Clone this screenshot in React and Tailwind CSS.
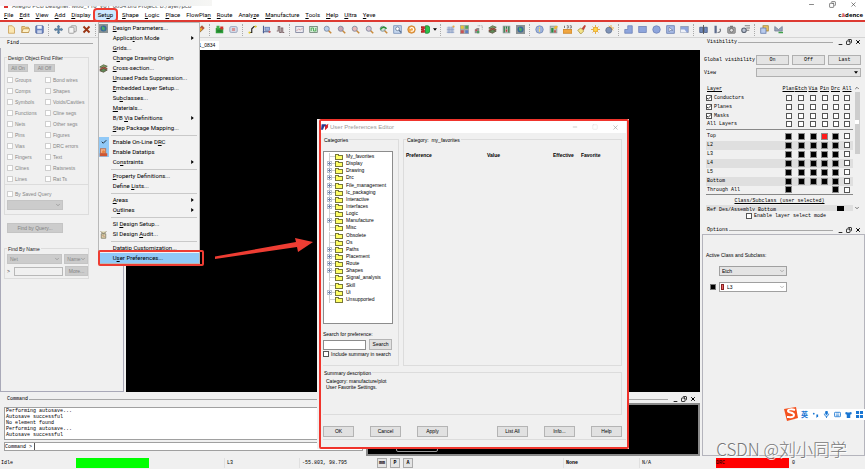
import React from 'react'
import { useState } from 'react'
import { Check, ChevronDown, ChevronUp, Copy, Minus, Square, X } from 'lucide-react'

const board = (
  <>
    <rect x="1" y="1" width="10" height="10" fill="#8b9496" />
    <rect x="2" y="2" width="8" height="8" fill="#b9c4c0" />
  </>
)

const lens = (fill) => (
  <>
    <path d="M7 7l4 4" stroke="#c98a3a" strokeWidth="2" />
    <circle cx="5" cy="5" r="3.4" fill={fill} stroke="#6f7f96" />
  </>
)

const icons = {
  new: <path d="M2 1h5l3 3v7H2z" fill="#fbe6b0" stroke="#c79a4c" />,
  open: (
    <>
      <path d="M1 10V2h4l1 1h4v7z" fill="#f3cf86" stroke="#b98f45" />
      <path d="M1 10l2-5h9l-2 5z" fill="#fdf0c8" stroke="#b98f45" />
    </>
  ),
  save: (
    <>
      <rect x="1" y="1" width="10" height="10" rx="1" fill="#6c86c4" stroke="#4a5d93" />
      <rect x="3" y="1" width="6" height="4" fill="#eef2fb" />
      <rect x="3" y="7" width="6" height="4" fill="#c9d3ea" />
    </>
  ),
  move: (
    <path
      d="M6 0l2 2.500H7V5h2.500V4L12 6 9.500 8V7H7v2.500h1L6 12 4 9.500h1V7H2.500v1L0 6l2.500-2v1H5V2.500H4z"
      fill="#5c86ab"
      stroke="#44627d"
      strokeWidth=".5"
    />
  ),
  copy: (
    <>
      <rect x="4" y="1" width="7" height="8" rx="1" fill="#e8e8e8" stroke="#8a8a8a" />
      <rect x="1" y="3" width="7" height="8" rx="1" fill="#f4f4f4" stroke="#8a8a8a" />
    </>
  ),
  remove: <path d="M2 2l8 8M10 2l-8 8" stroke="#9a3514" strokeWidth="2.500" />,
  pencil: (
    <>
      <path d="M1 11l2-5 5-5 3 3-5 5z" fill="#e8a33a" stroke="#7a5526" />
      <path d="M7 2l3 3" stroke="#c04040" strokeWidth="2" />
    </>
  ),
  place: (
    <>
      <rect x="1" y="4" width="10" height="7" fill="#2f9e3a" />
      <rect x="2" y="1" width="4" height="4" fill="#45b14f" />
      <rect x="7" y="2" width="4" height="4" fill="#d2322d" />
      <path d="M3 8h6" stroke="#175c1f" />
    </>
  ),
  chip: (
    <>
      <rect x="1" y="2" width="10" height="8" rx="2" fill="#d3d9e6" stroke="#8f9bb5" />
      <rect x="4" y="4" width="4" height="4" fill="#d89494" />
    </>
  ),
  route: (
    <>
      <path d="M2 10h3V5l3-3h3" fill="none" stroke="#222" strokeWidth="1.500" />
      <circle cx="2" cy="10" r="1.500" fill="#e6cd2d" />
      <circle cx="10" cy="2" r="1.500" fill="#e6cd2d" />
    </>
  ),
  slide: (
    <>
      <path d="M2 1v10M1 9h10" stroke="#4a5f94" strokeWidth="1.500" />
      <rect x="4" y="3" width="6" height="4" fill="#9fb2de" stroke="#5f77b0" />
      <circle cx="10" cy="9" r="1.500" fill="#c65b5b" />
    </>
  ),
  delay: <path d="M1 8h2V2h2v8h2V4h2v6h2" fill="none" stroke="#80686c" strokeWidth="1.400" />,
  zoomGrid: (
    <>
      <rect x="1" y="2" width="10" height="8" fill="#eceaf0" stroke="#6f7690" />
      <path d="M2 8l3-3 2 2 3-3" fill="none" stroke="#c98c8c" />
    </>
  ),
  zoomFit: (
    <>
      <rect x="1" y="2" width="10" height="8" fill="#d7ead8" stroke="#5d7565" />
      <path d="M3 8V4h3v4h3V4" fill="none" stroke="#2f9e3a" />
    </>
  ),
  zoomWin: lens('#b7cdea'),
  zoomIn: lens('#c9a7b5'),
  zoomOut: lens('#e9b9b9'),
  zoomMinus: lens('#d9c3d3'),
  zoomPrev: (
    <>
      {lens('#cfe3cf')}
      <path d="M2 6c2-4 6-4 8-1" fill="none" stroke="#2a9136" strokeWidth="2" />
    </>
  ),
  zoomSel: (
    <>
      <rect x="1" y="1" width="10" height="10" fill="#c6d8ef" stroke="#6a86b0" />
      <circle cx="6" cy="5" r="2.500" fill="#fff" stroke="#59708f" />
      <path d="M8 7l3 3" stroke="#59708f" strokeWidth="1.500" />
    </>
  ),
  refresh: (
    <>
      <circle cx="6" cy="6" r="5" fill="#f2a74a" stroke="#c37a2b" />
      <path d="M4 5a2.500 2.500 0 1 1 1 3" fill="none" stroke="#fff" strokeWidth="1.500" />
    </>
  ),
  view3d: (
    <>
      <path d="M0 2h5v3L3 6l2 1v3H0V8h2V7H0V5h2V4H0z" fill="#d12626" stroke="#7d1414" strokeWidth=".5" />
      <path d="M6 1h3c4 0 4 10 0 10H6z" fill="#2cc14a" stroke="#187a2b" />
    </>
  ),
  grid: (
    <>
      <path d="M3 2v9M5 2v9M7 2v9M9 2v9M1 4h10M1 6h10M1 8h10M1 10h10" stroke="#7a92c0" strokeWidth=".8" />
      <circle cx="10" cy="2" r="1.500" fill="#e9a84a" />
    </>
  ),
  color: (
    <>
      <rect x="0" y="0" width="12" height="12" fill="#a9a9a9" />
      <rect x="1" y="1" width="4" height="4" fill="#e4c53a" />
      <rect x="7" y="1" width="4" height="4" fill="#4fa45a" />
      <rect x="1" y="7" width="4" height="4" fill="#c95252" />
      <rect x="7" y="7" width="4" height="4" fill="#5d7fc4" />
    </>
  ),
  shadow: (
    <>
      <path d="M1 11V6l3-2h3v7z" fill="#8c8c8c" />
      <path d="M5 1h6v6" fill="none" stroke="#777" strokeDasharray="1 1" />
      <rect x="2" y="6" width="2" height="2" fill="#cf4a4a" />
      <rect x="4" y="8" width="3" height="3" fill="#4aa05a" />
    </>
  ),
  layers: (
    <>
      <path d="M1 4l5-3 5 2-5 3z" fill="#7da06b" stroke="#54603c" />
      <path d="M1 7l5-3 5 2-5 3z" fill="#c9604c" stroke="#7a3b30" />
      <path d="M1 9l5-3 5 2-5 3z" fill="#5f8a58" stroke="#5a4a38" />
    </>
  ),
  drc: (
    <>
      {board}
      <path d="M3 2v8M6 2v3M9 2v8" stroke="#2b7d40" strokeWidth="1.500" />
      <rect x="5" y="6" width="2" height="3" fill="#c43a3a" />
    </>
  ),
  globe: (
    <>
      <rect width="12" height="12" fill="#8b9293" />
      <circle cx="6" cy="6" r="4" fill="#39699c" />
      <path d="M4 3l4 2-1 4-3-2z" fill="#4fae63" />
    </>
  ),
  info: (
    <>
      <circle cx="6" cy="6" r="5" fill="#9db3de" stroke="#6e84b0" />
      <path d="M6 5v4M6 2.500v1.500" stroke="#f4dc68" strokeWidth="1.500" />
    </>
  ),
  measure: (
    <>
      {board}
      <rect x="3" y="4" width="3" height="6" fill="#2b8a45" />
      <path d="M6 4l3-3 3 1-3 4z" fill="#f0b832" />
      <rect x="7" y="7" width="2" height="3" fill="#c43a3a" />
    </>
  ),
  ruler: (
    <>
      <rect x="0" y="6" width="12" height="5" fill="#f0a640" stroke="#c47c1f" />
      <path d="M2 1v3M5 1h2v3H5M9 1h2v3H9" fill="none" stroke="#555" />
    </>
  ),
  brush: (
    <>
      <path d="M6 5l4-5 2 1-3 6z" fill="#c2463a" />
      <path d="M1 7l4-3 4 4-4 4z" fill="#f5e48a" stroke="#a58f3c" />
    </>
  ),
  sun: (
    <>
      <path d="M6 0v12M0 6h12M2 2l8 8M10 2l-8 8" stroke="#e39b1f" />
      <circle cx="6" cy="6" r="3" fill="#ffd84a" stroke="#e39b1f" />
    </>
  ),
  dim: (
    <>
      <path d="M8 0v7M4 4h8M5 1l6 6" stroke="#e39b1f" />
      <circle cx="5" cy="7" r="4" fill="#7f93b7" stroke="#5f6f8c" />
    </>
  ),
  shapeL: <path d="M5 1h6v10H1V6h4z" fill="#8ea5dc" stroke="#6a7fb5" />,
  shapeRect: <rect x="1" y="2" width="10" height="8" fill="#8ea5dc" stroke="#6a7fb5" />,
  shapeCircle: <circle cx="6" cy="6" r="5" fill="#8ea5dc" stroke="#6a7fb5" />,
  shapeSelect: (
    <>
      <rect x="1" y="1" width="10" height="10" fill="#a9bce6" stroke="#5a70a8" />
      <path d="M4 3l5 4H6l-2 2z" fill="#fff" stroke="#46587f" strokeWidth=".7" />
    </>
  ),
  shapeVoid: (
    <>
      <rect x="1" y="2" width="10" height="8" fill="#8ea5dc" stroke="#8a94ad" />
      <path d="M1 10V6h5l3 4z" fill="#eef1f8" />
    </>
  ),
  mirror: (
    <>
      <path d="M1 3h4v7H1zM7 3h4v7H7z" fill="#7089bb" stroke="#42547d" />
      <path d="M6 0v12" stroke="#333" />
    </>
  ),
  tools: (
    <>
      <rect x="2" y="1" width="3" height="10" fill="#5c6b8c" />
      <path d="M6 10c4 0 5-3 3-5" fill="none" stroke="#70747c" strokeWidth="1.500" />
    </>
  ),
  camera: (
    <>
      <rect x="1" y="3" width="10" height="8" rx="1" fill="#a7a7a7" stroke="#6c6c6c" />
      <circle cx="6" cy="7" r="2.500" fill="#e3e3e3" stroke="#555" />
      <rect x="4" y="1" width="4" height="2" fill="#777" />
    </>
  ),
  gear: (
    <>
      <path d="M5 1h7M7 4h5M7 7h4" stroke="#555" />
      <circle cx="4" cy="7" r="3" fill="#bac3d2" stroke="#5d6675" strokeWidth="1.500" />
    </>
  ),
  stack: (
    <>
      <rect x="4" y="1" width="7" height="7" fill="#f0c765" stroke="#9a7a2e" />
      <rect x="1" y="4" width="7" height="7" fill="#b9cbec" stroke="#5b74a8" />
    </>
  ),
  export: (
    <>
      <path d="M1 2l5 4 5-4v6H1z" fill="#9aa7bd" stroke="#6f7c92" />
      <path d="M6 10h6" stroke="#3fa14a" strokeWidth="2" />
    </>
  ),
  tip: (
    <>
      <rect x="2" y="1" width="7" height="6" fill="#f2b089" stroke="#b9603b" />
      <path d="M1 11V7h10v4z" fill="#cf5632" />
      <circle cx="6" cy="5" r="2" fill="#e9813f" />
    </>
  ),
  audit: (
    <>
      <path d="M2 2l4 3 4-3M3 5h6v6H3z" fill="#d9d2a8" stroke="#7d7460" />
      <path d="M5 7l2 2" stroke="#b34141" />
    </>
  ),
}

function Icon({ name }) {
  return (
    <svg viewBox="0 0 12 12" className="size-[9px] shrink-0" aria-hidden="true">
      {icons[name]}
    </svg>
  )
}

// "_x" marks the mnemonic letter
function Mnemonic({ text }) {
  const at = text.indexOf('_')
  if (at < 0) return text
  return (
    <>
      {text.slice(0, at)}
      <u>{text[at + 1]}</u>
      {text.slice(at + 2)}
    </>
  )
}

const menus = [
  '_File', '_Edit', '_View', '_Add', '_Display', 'Set_up', '_Shape', '_Logic', '_Place',
  'FlowPla_n', '_Route', 'Analy_ze', '_Manufacture', '_Tools', '_Help', '_Ultra', '_Yeve',
]

const setupMenu = [
  [
    { label: '_Design Parameters...', icon: 'globe' },
    { label: 'Applica_tion Mode', sub: true },
    { label: '_Grids...' },
    { label: 'C_hange Drawing Origin' },
    { label: '_Cross-section...', icon: 'layers' },
    { label: '_Unused Pads Suppression...' },
    { label: '_Embedded Layer Setup...' },
    { label: 'Su_bclasses...' },
    { label: '_Materials...' },
    { label: 'B/B _Via Definitions', sub: true },
    { label: '_Step Package Mapping...' },
  ],
  [
    { label: 'Enable On-Line D_RC', checked: true },
    { label: 'Enable Datatips', icon: 'tip', on: true },
    { label: 'Co_nstraints', sub: true },
  ],
  [{ label: '_Property Definitions...' }, { label: 'Define _Lists...' }],
  [
    { label: '_Areas', sub: true },
    { label: 'O_utlines', sub: true },
  ],
  [{ label: 'SI _Design Setup...' }, { label: 'SI Design _Audit...', icon: 'audit' }],
  [{ label: 'Datatip Customi_zation...' }, { label: 'U_ser Preferences...', active: true }],
]

const toolbar = [
  ['new', 'open', 'save'],
  ['move', 'copy', 'remove'],
  ['pencil'],
  ['place', 'chip'],
  ['route', 'slide', 'delay'],
  ['zoomGrid', 'zoomFit', 'zoomWin', 'zoomIn', 'zoomOut', 'zoomMinus', 'zoomPrev', 'zoomSel', 'refresh', 'view3d'],
  ['grid', 'color', 'shadow', 'layers', 'drc', 'globe'],
  ['info', 'measure', 'ruler', 'brush', 'sun', 'dim'],
  ['shapeL', 'shapeRect', 'shapeCircle', 'shapeSelect', 'shapeVoid'],
  ['mirror', 'tools', 'camera', 'gear'],
  ['stack', 'export'],
]

const filters = [
  ['Groups', 'Bond wires'],
  ['Comps', 'Shapes'],
  ['Symbols', 'Voids/Cavities'],
  ['Functions', 'Cline segs'],
  ['Nets', 'Other segs'],
  ['Pins', 'Figures'],
  ['Vias', 'DRC errors'],
  ['Fingers', 'Text'],
  ['Clines', 'Ratsnests'],
  ['Lines', 'Rat Ts'],
]

const categories = [
  ['My_favorites', false],
  ['Display', true],
  ['Drawing', true],
  ['Drc', true],
  ['File_management', true],
  ['Ic_packaging', true],
  ['Interactive', true],
  ['Interfaces', true],
  ['Logic', false],
  ['Manufacture', true],
  ['Misc', false],
  ['Obsolete', false],
  ['Os', false],
  ['Paths', true],
  ['Placement', true],
  ['Route', true],
  ['Shapes', true],
  ['Signal_analysis', false],
  ['Skill', false],
  ['Ui', true],
  ['Unsupported', false],
]

const columns = ['Plan', 'Etch', 'Via', 'Pin', 'Drc', 'All']
const layers = ['Top', 'L2', 'L3', 'L4', 'L5', 'Bottom', 'Through All']

const mono = "font-['Liberation_Mono',monospace] text-[5px]"
const sans = "font-['Liberation_Sans',Arial,sans-serif] text-[5px]"
const greyButton = 'border border-[#c4c4c4] bg-[#cccccc] text-[#808080]'
const dialogButton = 'border border-[#b4b4b4] bg-[#e1e1e1] text-center'

function TitleBar() {
  return (
    <header className="flex h-[10px] items-start justify-between overflow-hidden bg-white">
      <div className="relative h-[9px] w-[212px] overflow-hidden font-['Roboto',sans-serif] text-[6px] leading-[11px] whitespace-nowrap text-[#555]">
        <span className="mx-1 inline-block size-1 bg-[#d33]" />
        Allegro PCB Designer: M80_Y10_V01_0834.brd Project: D:/ayer/pcb
        <div className="absolute inset-x-0 top-0 h-[6px] bg-linear-to-r from-[#f7f2f6] via-[#e2e6ea] to-[#f6f6f4]" />
      </div>
      <div className="flex items-center gap-[14px] pt-px pr-2 text-[#333]">
        <button type="button" aria-label="Minimize"><Minus className="size-[7px]" /></button>
        <button type="button" aria-label="Restore"><Copy className="size-[7px] -scale-x-100" /></button>
        <button type="button" aria-label="Close"><X className="size-[7px]" /></button>
      </div>
    </header>
  )
}

function SetupMenu() {
  return (
    <div className="absolute top-[12px] left-[3px] z-20 w-[102px] border border-[#b8b8b8] bg-[#f2f2f2] text-left">
      {setupMenu.map((group, i) => (
        <div key={i} className={i > 0 ? 'relative pt-1' : ''}>
          {i > 0 && <hr className="absolute top-[2px] right-[2px] left-3 border-[#c9c9c9]" />}
          {group.map((item) => (
            <button
              key={item.label}
              type="button"
              className={`flex h-[10px] w-full items-center ${item.active ? 'bg-[#91c9f7]' : ''}`}
            >
              <span
                className={`flex h-[10px] w-[10px] items-center justify-center ${
                  item.checked || item.on ? 'bg-[#91c9f7]' : ''
                }`}
              >
                {item.checked && <Check className="size-[6px]" strokeWidth={3} />}
                {item.icon && <Icon name={item.icon} />}
              </span>
              <span className="ml-1 flex-1 text-left whitespace-nowrap">
                <Mnemonic text={item.label} />
              </span>
              {item.sub && (
                <svg viewBox="0 0 4 6" className="mr-[5px] h-1 w-[3px]">
                  <path d="M0 0l4 3-4 3z" />
                </svg>
              )}
            </button>
          ))}
        </div>
      ))}
      <div className="absolute -right-[5px] -bottom-[3px] -left-px h-[16px] rounded-[2px] border-2 border-[#ee3d33]" />
    </div>
  )
}

function MenuBar() {
  return (
    <nav className="flex h-[12px] items-start border-b-2 border-[#dd3a32] bg-white pl-px font-['Roboto',sans-serif] text-[6px] leading-[10px]">
      {menus.map((label) =>
        label === 'Set_up' ? (
          <div key={label} className="relative mr-[3px] ml-px">
            <button type="button" className="rounded-[2px] bg-[#cce8ff] px-[3px] outline-2 outline-[#ee3d33]">
              <Mnemonic text={label} />
            </button>
            <SetupMenu />
          </div>
        ) : (
          <button key={label} type="button" className="px-[3px]">
            <Mnemonic text={label} />
          </button>
        ),
      )}
      <span className="ml-auto pr-[2px] font-['Open_Sans',sans-serif] font-bold">
        c<span className="text-[#c33]">ā</span>dence
      </span>
    </nav>
  )
}

function Toolbar() {
  return (
    <div className="flex h-[16px] items-center border-b border-[#d4d4d4] bg-[#f0f0f0] pl-1">
      {toolbar.map((group, i) => (
        <div key={i} className="flex items-center">
          {i > 0 && <span className="mx-[2px] h-3 border-l border-dotted border-[#aaa]" />}
          <div className={`flex ${i === 2 ? 'w-[109px] justify-end' : ''}`}>
            {group.map((name) => (
              <button key={name} type="button" aria-label={name} className="flex w-[14px] justify-center">
                <Icon name={name} />
              </button>
            ))}
          </div>
          {i === 5 && (
            <svg viewBox="0 0 6 4" className="mx-px h-[3px] w-1">
              <path d="M0 0h6L3 4z" />
            </svg>
          )}
        </div>
      ))}
    </div>
  )
}

function PanelHeader({ title, controls }) {
  return (
    <div className={`flex h-2 items-center gap-px pl-[7px] leading-[8px] ${mono}`}>
      <h2>{title}</h2>
      <div className="h-px flex-1 bg-[#a8a8a8]" />
      {controls && (
        <div className="ml-1 flex items-center gap-[3px] pr-1">
          <button type="button" aria-label="Minimize"><Minus className="mt-1 size-[5px]" strokeWidth={4} /></button>
          <button type="button" aria-label="Float"><Copy className="size-[6px] -scale-x-100" strokeWidth={3} /></button>
          <button type="button" aria-label="Close"><X className="size-[6px]" strokeWidth={4} /></button>
        </div>
      )}
    </div>
  )
}

function Tick({ label, className = '' }) {
  return (
    <label className={`flex items-center gap-[2px] whitespace-nowrap ${className}`}>
      <input type="checkbox" className="size-[6px] appearance-none border border-[#cfcfcf] bg-white" />
      {label}
    </label>
  )
}

function Pick({ label, options, className, light }) {
  return (
    <div className={`relative ${className}`}>
      <select
        aria-label={label}
        className={`block h-[10px] w-full appearance-none border px-[2px] leading-[8px] ${
          light ? 'border-[#a0a0a0] bg-white' : 'border-[#c4c4c4] bg-[#cccccc]'
        }`}
      >
        {options.map((option) => (
          <option key={option}>{option}</option>
        ))}
      </select>
      <ChevronDown className="pointer-events-none absolute top-[2px] right-[2px] size-[6px] text-[#777]" />
    </div>
  )
}

function FindPanel() {
  return (
    <aside className="flex w-[126px] shrink-0 flex-col pr-[2px]">
      <div className="py-px pr-[31px]">
        <PanelHeader title="Find" />
      </div>
      <div className={`flex-1 border-x border-b border-[#a9a9b8] pt-[9px] pl-[3px] leading-[8px] text-[#858585] ${sans}`}>
        <div className="w-[85px] border border-[#dcdcdc]">
          <h3 className="-mt-1 ml-[2px] w-fit bg-[#f0f0f0] px-px leading-[8px] text-[#222]">
            Design Object Find Filter
          </h3>
          <div className="mt-[2px] flex gap-[6px] pl-[3px] leading-[6px]">
            <button type="button" className={`w-[20px] ${greyButton}`}>All On</button>
            <button type="button" className={`w-[21px] ${greyButton}`}>All Off</button>
          </div>
          <div className="mt-[2px] grid grid-cols-[38px_1fr] border-b border-[#dcdcdc] pl-[2px]">
            {filters.flat().map((name) => (
              <Tick key={name} label={name} className="h-[11px]" />
            ))}
          </div>
          <Tick label="By Saved Query" className="mt-[5px] h-[8px] pl-[2px]" />
          <Pick label="Saved query" options={['']} className="mt-[2px] mb-1 ml-[2px] w-[56px]" />
        </div>
        <button type="button" className={`mt-2 ml-[3px] block h-[10px] w-[56px] leading-[8px] ${greyButton}`}>
          Find by Query...
        </button>
        <div className="mt-[15px] w-[85px] border border-[#dcdcdc] pb-[2px]">
          <h3 className="-mt-1 ml-[2px] w-fit bg-[#f0f0f0] px-px leading-[8px] text-[#222]">Find By Name</h3>
          <div className="mt-px flex gap-[2px] pl-[2px]">
            <Pick label="Object" options={['Net']} className="w-[56px]" />
            <Pick label="Find by" options={['Name']} className="w-[24px]" />
          </div>
          <div className="mt-[2px] flex items-center gap-[2px] pl-[2px]">
            <span className="w-[5px] text-[#333]">&gt;</span>
            <input type="text" aria-label="Name" className="h-[9px] w-[49px] border border-[#b8b8b8] bg-[#f0f0f0]" />
            <button type="button" className={`h-[10px] w-[23px] leading-[8px] ${greyButton}`}>More...</button>
          </div>
        </div>
      </div>
    </aside>
  )
}

function Swatch({ label, red }) {
  return (
    <input
      type="checkbox"
      aria-label={label}
      className={`mx-auto block size-[7px] appearance-none border border-[#8c8c8c] ${red ? 'bg-[#ff1a1a]' : 'bg-black'}`}
    />
  )
}

function Box({ label }) {
  return (
    <input
      type="checkbox"
      aria-label={label}
      className="mx-auto block size-[6px] appearance-none border border-[#555] bg-white"
    />
  )
}

function VisibilityPanel() {
  return (
    <section className={`pb-[6px] leading-[8px] ${mono}`}>
      <PanelHeader title="Visibility" controls />
      <div className="mt-[9px] flex items-center pr-1 pl-[4px]">
        <span className="w-[52px] whitespace-nowrap">Global visibility</span>
        <div className="flex flex-1 gap-[3px]">
          {['On', 'Off', 'Last'].map((name) => (
            <button key={name} type="button" className="h-[10px] flex-1 border border-[#b0b0b0] bg-[#e4e4e4] leading-[8px]">
              {name}
            </button>
          ))}
        </div>
      </div>
      <label className="mt-[3px] flex items-center pr-1 pl-[4px]">
        <span className="w-[52px]">View</span>
        <span className="relative flex-1">
          <select className="block h-[9px] w-full appearance-none border border-[#b0b0b0] bg-[#e4e4e4]" />
          <svg viewBox="0 0 6 4" className="absolute top-[3px] right-[3px] h-[3px] w-1">
            <path d="M0 0h6L3 4z" />
          </svg>
        </span>
      </label>
      <div className="mt-2 flex pr-[5px] pl-[6px]">
        <div className="h-[126px] flex-1 overflow-hidden">
          <table className="w-full table-fixed border-collapse">
            <colgroup>
              <col />
              <col className="w-[13px]" />
              <col className="w-[12px]" />
              <col className="w-[12px]" />
              <col className="w-[11px]" />
              <col className="w-[11px]" />
              <col className="w-[12px]" />
            </colgroup>
            <thead>
              <tr className="h-2 underline">
                <th className="p-0 pl-px text-left font-normal">Layer</th>
                {columns.map((name) => (
                  <th key={name} className="p-0 font-normal"><span className="flex justify-center">{name}</span></th>
                ))}
              </tr>
            </thead>
            <tbody>
              {['Conductors', 'Planes', 'Masks', 'All Layers'].map((name) => (
                <tr key={name} className="h-[9px] last:border-b last:border-[#888]">
                  <td className="p-0">
                    {name === 'All Layers' ? (
                      <span className="pl-px">{name}</span>
                    ) : (
                      <label className="flex items-center gap-[2px]">
                        <span className="relative size-[6px]">
                          <input type="checkbox" defaultChecked className="block size-[6px] appearance-none border border-[#555] bg-white" />
                          <Check className="absolute inset-0 size-[6px]" strokeWidth={3} />
                        </span>
                        {name}
                      </label>
                    )}
                  </td>
                  {columns.map((col) => (
                    <td key={col} className="p-0"><Box label={`${name} ${col}`} /></td>
                  ))}
                </tr>
              ))}
            </tbody>
            <tbody className="before:block before:h-[2px]">
              {layers.map((name) => (
                <tr key={name} className="h-[9px] even:bg-[#dfdfdf] last:border-b last:border-[#888]">
                  <td className="p-0 pl-px">{name}</td>
                  {columns.map((col) => (
                    <td key={col} className="p-0">
                      {col === 'All' ? (
                        <Box label={`${name} ${col}`} />
                      ) : name !== 'Through All' || col === 'Plan' || col === 'Drc' ? (
                        <Swatch label={`${name} ${col}`} red={name === 'Top' && col === 'Pin'} />
                      ) : null}
                    </td>
                  ))}
                </tr>
              ))}
            </tbody>
          </table>
          <p className="mt-[2px] text-center whitespace-nowrap underline">Class/Subclass (user selected)</p>
          <div className="flex h-[9px] items-center justify-between bg-[#dfdfdf] pr-[9px] pl-px">
            Ref Des/Assembly Bottom
            <span className="size-[7px] bg-black" />
          </div>
        </div>
        <div className="ml-px flex w-[6px] flex-col items-center">
          <ChevronUp className="size-[6px]" />
          <div className="mt-px flex h-[62px] w-[5px] flex-col items-center bg-[#cdcdcd] pt-[28px]">
            <span className="size-1 bg-white" />
          </div>
          <ChevronDown className="mt-auto size-[6px]" />
        </div>
      </div>
      <label className="mt-px flex items-center gap-[2px] pl-[46px]">
        <input type="checkbox" className="size-[6px] appearance-none border border-[#555] bg-white" />
        Enable layer select mode
      </label>
    </section>
  )
}

function OptionsPanel() {
  return (
    <section className="flex flex-1 flex-col">
      <PanelHeader title="Options" controls />
      <div className={`ml-[2px] flex-1 border border-[#b4b4bc] pt-[16px] pl-[3px] leading-[8px] ${sans}`}>
        <h3>Active Class and Subclass:</h3>
        <Pick label="Class" options={['Etch']} className="mt-[7px] ml-[13px] w-[68px] [&_select]:border-[#a0a0a0] [&_select]:bg-[#e4e4e4]" />
        <div className="mt-[6px] flex items-center pl-1">
          <span className="size-[6px] border border-[#777] bg-black" />
          <div className="relative ml-[3px] w-[68px]">
            <Pick label="Subclass" options={['L3']} light className="[&_select]:pl-[7px]" />
            <span className="absolute top-[2px] left-[2px] h-[6px] w-[3px] border border-[#822] bg-[#e66]" />
          </div>
        </div>
      </div>
    </section>
  )
}

function CommandPanel() {
  const [command, setCommand] = useState('')
  return (
    <section className="h-[64px] pt-[3px]">
      <PanelHeader title="Command" controls />
      <div className="flex gap-[3px]">
        <div className={`mt-1 w-[363px] pl-1 ${mono}`}>
          <div className="flex h-[33px] flex-col justify-end overflow-hidden border border-[#a0a0a0] bg-white px-px pb-px leading-[6px]">
            <p>Performing autosave...</p>
            <p>Autosave successful</p>
            <p>No element found</p>
            <p>Performing autosave...</p>
            <p>Autosave successful</p>
          </div>
          <label className="mt-[2px] flex h-[9px] items-center border border-[#a0a0a0] bg-white leading-[8px]">
            <span className="w-[28px] shrink-0 whitespace-nowrap">Command &gt;</span>
            <input
              type="text"
              value={command}
              onChange={(e) => setCommand(e.target.value)}
              className="ml-px h-[7px] min-w-0 flex-1 border-l border-[#555]"
            />
          </label>
        </div>
        <div className="flex h-[53px] flex-1 border-2 border-[#8a8a8a] bg-black pl-[28px]">
          <div className="h-[47px] w-[42px] rounded-[2px] border border-[#999]" />
        </div>
      </div>
    </section>
  )
}

function StatusBar() {
  return (
    <footer className={`flex h-[13px] items-center leading-[10px] whitespace-nowrap ${mono}`}>
      <span className="w-[76px] pl-px">Idle</span>
      <span className="h-[10px] w-[73px] bg-[#00ff00]" />
      <span className="ml-[75px] w-[75px] border-l border-[#e0e0e0] pl-[2px]">L3</span>
      <span className="w-[78px] border-l border-[#e0e0e0] pl-[2px]">-55.803, 98.795</span>
      <div className="flex gap-[3px]">
        {['mm', 'P', 'A'].map((name) => (
          <button key={name} type="button" className="h-[10px] w-[10px] border border-[#aaa] bg-[#e4e4e4] text-center leading-[8px] font-bold">
            {name}
          </button>
        ))}
      </div>
      <span className="ml-[75px] w-[75px] border-l border-[#e0e0e0]" />
      <span className="w-[76px] border-l border-[#e0e0e0] pl-[2px] font-bold">None</span>
      <span className="w-[77px] border-l border-[#e0e0e0] pl-[2px]">N/A</span>
      <span className="h-[10px] w-[73px] bg-[#ff0000]">DRC</span>
      <span className="pl-[3px]">0</span>
    </footer>
  )
}

function TreeRow({ name, branch }) {
  return (
    <li className="flex h-[7px] items-center leading-[7px]">
      <svg viewBox="0 0 20 7" className="mr-[2px] h-[7px] w-[20px] shrink-0" shapeRendering="crispEdges">
        <path d="M5.500 0v7M5.500 3.500h6" stroke="#d0d0d0" />
        {branch && (
          <>
            <rect x="3.500" y="1.500" width="4" height="4" fill="#fff" stroke="#b9c2d0" />
            <path d="M4 3.500h3M5.500 2v3" stroke="#7283ab" />
          </>
        )}
        <path d="M11.500 1.500h3v1h4v4h-7z" fill="#ffff66" stroke="#77773a" />
      </svg>
      {name}
    </li>
  )
}

function PreferencesDialog() {
  return (
    <div
      role="dialog"
      aria-label="User Preferences Editor"
      className={`absolute top-[119px] left-[317px] z-10 flex h-[330px] w-[312px] flex-col bg-[#f0f0f0] pt-[2px] pr-[3px] pb-[3px] pl-1 leading-[8px] ${sans}`}
    >
      <div className="pointer-events-none absolute inset-y-0 right-0 left-[2px] rounded-[2px] border-2 border-[#f0342c]" />
      <header className="flex h-[12px] items-center bg-white pr-[7px] text-[6px] text-[#999]">
        <svg viewBox="0 0 12 12" className="size-[8px]">
          <path d="M1 2h6l4 4-3 1-3-2-2 5H0z" fill="#273b8f" />
          <path d="M6 4l5-3-1 6-4 4z" fill="#d8262c" />
        </svg>
        <h2 className="ml-px flex-1">User Preferences Editor</h2>
        <div className="flex items-center gap-[14px]">
          <button type="button" aria-label="Minimize"><Minus className="size-[6px]" /></button>
          <button type="button" aria-label="Maximize" className="text-[#ddd]"><Square className="size-[6px]" /></button>
          <button type="button" aria-label="Close"><X className="size-[7px]" /></button>
        </div>
      </header>
      <div className="flex h-[233px] gap-1 pt-[6px] pr-1 pl-[2px]">
        <section className="w-[76px] border-t border-r border-b border-[#dcdcdc]">
          <h3 className="-mt-1 w-fit bg-[#f0f0f0] px-px">Categories</h3>
          <ul className="mt-[7px] flex h-[173px] w-[70px] flex-col justify-between border border-[#8c8c8c] bg-white pt-px pb-5">
            {categories.map(([name, branch]) => (
              <TreeRow key={name} name={name} branch={branch} />
            ))}
          </ul>
          <label className="mt-[6px] block" htmlFor="pref-search">Search for preference:</label>
          <div className="flex items-center justify-between pt-px pr-[6px]">
            <input id="pref-search" type="text" className="h-[10px] w-[43px] border border-[#8c8c8c] bg-white" />
            <button type="button" className={`h-[11px] w-[23px] leading-[9px] ${dialogButton}`}>Search</button>
          </div>
          <label className="flex items-center gap-[2px] whitespace-nowrap">
            <input type="checkbox" className="size-[6px] appearance-none border border-[#555] bg-white" />
            Include summary in search
          </label>
        </section>
        <section className="flex-1 border border-[#dcdcdc]">
          <h3 className="-mt-1 ml-[2px] w-fit bg-[#f0f0f0] px-px whitespace-pre">Category:  my_favorites</h3>
          <table className="mt-[7px] w-full table-fixed text-left">
            <thead>
              <tr>
                <th className="w-[83px] p-0 pl-[2px]">Preference</th>
                <th className="p-0">Value</th>
                <th className="w-[28px] p-0">Effective</th>
                <th className="w-[40px] p-0">Favorite</th>
              </tr>
            </thead>
          </table>
        </section>
      </div>
      <section className="mt-[6px] mr-1 ml-[2px] h-[43px] border-y border-r border-[#dcdcdc]">
        <h3 className="-mt-1 w-fit bg-[#f0f0f0] px-px">Summary description</h3>
        <p className="mt-px ml-[3px] leading-[6px]">
          Category: manufacture/plot
          <br />
          User Favorite Settings.
        </p>
      </section>
      <div className="mt-[11px] mr-1 ml-[2px] flex gap-[16px]">
        {['OK', 'Cancel', 'Apply', 'List All', 'Info...', 'Help'].map((name) => (
          <button key={name} type="button" className={`h-[11px] w-[31px] leading-[9px] ${name === 'List All' ? 'ml-auto' : ''} ${dialogButton}`}>
            {name}
          </button>
        ))}
      </div>
      <div className="mt-[2px] ml-[2px] flex-1 border-t border-[#dcdcdc]" />
    </div>
  )
}

function InputBar() {
  return (
    <div className="absolute top-[406px] right-0 z-10 flex h-[16px] items-center">
      <svg viewBox="0 0 16 16" className="z-10 -mr-1 size-4">
        <path d="M1 3l12-2 2 11-11 3z" fill="#f4511e" />
        <path d="M12 4c-3-1-7-1-7 1s6 1 6 4-5 2-7 2" fill="none" stroke="#fff" strokeWidth="2" />
      </svg>
      <div className="flex h-[11px] items-center gap-1 bg-white pr-[2px] pl-[6px] font-['Noto_Sans_CJK_SC',sans-serif] text-[7px] leading-[10px] font-bold text-[#1976d2]">
        <span>英</span>
        <svg viewBox="0 0 8 8" className="size-[7px]" fill="#1976d2">
          <circle cx="2" cy="3" r="1" />
          <path d="M5 4h2v2L5 8z" />
        </svg>
        <svg viewBox="0 0 8 8" className="size-[7px]" fill="none" stroke="#1976d2">
          <rect x="3" y="0" width="2" height="4" rx="1" fill="#1976d2" />
          <path d="M1.500 3c0 4 5 4 5 0M4 6v2" />
        </svg>
        <svg viewBox="0 0 8 8" className="size-[7px]" fill="none" stroke="#1976d2">
          <rect x=".5" y="1.500" width="7" height="5" rx="1" />
          <path d="M2 3.500h4M2 5h4" strokeWidth=".7" />
        </svg>
        <svg viewBox="0 0 8 8" className="size-[7px]" fill="#1976d2">
          <path d="M0 2l2-1c1 1 3 1 4 0l2 1-1 2H6v4H2V4H1z" />
        </svg>
        <svg viewBox="0 0 8 8" className="size-[7px]" fill="#1976d2">
          <path d="M0 0h3.500v3.500H0zM4.500 0H8v3.500H4.500zM0 4.500h3.500V8H0zM4.500 4.500H8V8H4.500z" />
        </svg>
      </div>
    </div>
  )
}

export default function App() {
  return (
    <div className="relative flex min-h-screen flex-col overflow-hidden bg-[#f0f0f0] text-black">
      <TitleBar />
      <MenuBar />
      <Toolbar />
      <div className="flex flex-1">
        <main className="flex min-w-0 flex-1 flex-col">
          <div className="flex flex-1">
            <FindPanel />
            <div className="flex flex-1 flex-col">
              <div className="flex h-[12px] items-end pl-[50px]">
                <button type="button" className={`h-[9px] bg-white px-1 leading-[9px] ${sans}`}>
                  M80_V01_0834
                </button>
              </div>
              <div className="flex-1 bg-black" />
            </div>
          </div>
          <CommandPanel />
        </main>
        <div className="flex w-[165px] shrink-0 flex-col">
          <VisibilityPanel />
          <OptionsPanel />
        </div>
      </div>
      <StatusBar />
      <PreferencesDialog />
      <svg viewBox="0 0 100 22" className="absolute top-[237px] left-[214px] h-[22px] w-[100px]">
        <path d="M1 19.500L82 5l-1-4 18 4-15 10-1-5L1 22z" fill="#ee3d33" />
      </svg>
      <InputBar />
      <p className="absolute right-[18px] bottom-3 font-['Noto_Sans_CJK_SC',sans-serif] text-[17px] leading-[16px] font-light text-[#777] text-shadow-[1px_1px_0_#fff]">
        CSDN @刘小同学
      </p>
    </div>
  )
}
